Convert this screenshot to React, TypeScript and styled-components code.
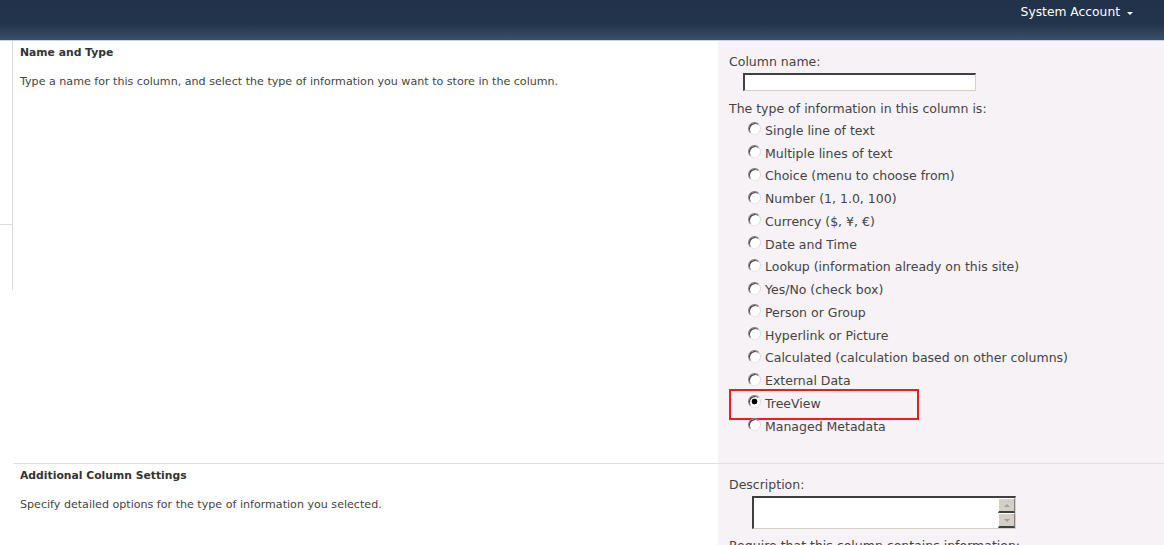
import React from "react";
import styled, { createGlobalStyle } from "styled-components";

const Global = createGlobalStyle`
  html, body { margin: 0; padding: 0; background: #fff; }
  body { font-family: Verdana, "DejaVu Sans", sans-serif; font-size: 11.1px; color: #444; overflow: hidden; }
  * { box-sizing: border-box; }
`;

const Page = styled.div`
  width: 1164px;
  height: 545px;
  overflow: hidden;
`;

const TopBar = styled.header`
  height: 41px;
  display: flex;
  justify-content: flex-end;
  align-items: flex-start;
  padding: 4px 31px 0 0;
  background: linear-gradient(to bottom, #21324a 0px, #22344b 24px, #2e4258 32px, #3b5068 40px);
  border-bottom: 1px solid #c9d1db;
`;

const UserMenu = styled.div`
  display: flex;
  align-items: center;
  gap: 7px;
  color: #fff;
  font-size: 12.3px;
  line-height: 16px;
`;

const Caret = styled.span`
  width: 0;
  height: 0;
  border-left: 3px solid transparent;
  border-right: 3px solid transparent;
  border-top: 3px solid #fff;
  margin-top: 2px;
`;

const Body = styled.div`
  display: flex;
`;

const LeftNav = styled.nav`
  width: 13px;
  flex: none;
  display: flex;
  flex-direction: column;
`;

const NavBlock = styled.div<{ $h: number; $top?: boolean }>`
  height: ${(p) => p.$h}px;
  border-right: 1px solid #dbdbdb;
  border-top: ${(p) => (p.$top ? "1px solid #dbdbdb" : "none")};
`;

const Main = styled.main`
  flex: 1;
  display: flex;
  flex-direction: column;
`;

const Section = styled.section<{ $divider?: boolean }>`
  display: grid;
  grid-template-columns: 705px 1fr;
  border-top: ${(p) => (p.$divider ? "1px solid #e0dfe1" : "none")};
`;

const Info = styled.div<{ $h: number }>`
  padding: 5px 7px 0 7px;
  min-height: ${(p) => p.$h}px;
`;

const InfoTitle = styled.h3`
  margin: 0 0 15px 0;
  font-size: 10.8px;
  font-weight: bold;
  color: #333;
  line-height: 14px;
`;

const InfoText = styled.p`
  margin: 0;
  line-height: 14px;
  color: #444;
`;

const Controls = styled.div`
  background: #f6f2f6;
  padding: 13px 0 0 11px;
  display: flex;
  flex-direction: column;
  font-size: 12.5px;
`;

const Label = styled.div`
  line-height: 15px;
  color: #444;
`;

const NameInput = styled.div`
  width: 233px;
  height: 18px;
  margin: 4px 0 0 14px;
  background: #fff;
  border-top: 2px solid #404040;
  border-left: 2px solid #404040;
  border-right: 1px solid #d4d0c8;
  border-bottom: 1px solid #d4d0c8;
`;

const TypeLabel = styled(Label)`
  margin-top: 10px;
`;

const RadioList = styled.div`
  display: flex;
  flex-direction: column;
  padding: 3px 0 0 19px;
`;

const RadioRow = styled.label<{ $marked?: boolean }>`
  position: relative;
  height: 22.75px;
  display: flex;
  align-items: center;
  gap: 4px;
  color: #444;
  line-height: 15px;
  &::before {
    content: "";
    display: ${(p) => (p.$marked ? "block" : "none")};
    position: absolute;
    left: -19px;
    top: -3px;
    width: 186px;
    height: 27px;
    border: 2px solid #ea1c24;
  }
`;

const RadioDot = styled.span<{ $checked?: boolean }>`
  width: 13px;
  height: 13px;
  flex: none;
  border-radius: 50%;
  margin-top: -3px;
  background: ${(p) =>
    p.$checked
      ? "radial-gradient(circle, #000 0 2.6px, #fff 3.2px)"
      : "#fff"};
  border: 1px solid;
  border-color: #7f7f7f #dcdcdc #e8e8e8 #7f7f7f;
  box-shadow: inset 1px 1px 0 #404040;
`;

const DescWrap = styled.div`
  display: flex;
  flex-direction: column;
`;

const TextArea = styled.div`
  width: 264px;
  height: 33px;
  margin: 4px 0 0 23px;
  display: flex;
  background: #fff;
  border-top: 2px solid #404040;
  border-left: 2px solid #404040;
  border-right: 1px solid #d4d0c8;
  border-bottom: 1px solid #d4d0c8;
`;

const AreaField = styled.div`
  flex: 1;
`;

const ScrollBar = styled.div`
  width: 17px;
  display: flex;
  flex-direction: column;
  background: #e4e0dc;
`;

const ScrollBtn = styled.div`
  flex: 1;
  display: flex;
  align-items: center;
  justify-content: center;
  background: #d4d0c8;
  border-top: 1px solid #fff;
  border-left: 1px solid #fff;
  border-right: 1px solid #808080;
  border-bottom: 2px solid #404040;
`;

const Tri = styled.span<{ $up?: boolean }>`
  width: 0;
  height: 0;
  border-left: 3px solid transparent;
  border-right: 3px solid transparent;
  ${(p) => (p.$up ? "border-bottom: 3px solid #a0a0a0;" : "border-top: 3px solid #a0a0a0;")}
`;

const RequireLabel = styled(Label)`
  margin-top: 9px;
`;

const types = [
  "Single line of text",
  "Multiple lines of text",
  "Choice (menu to choose from)",
  "Number (1, 1.0, 100)",
  "Currency ($, ¥, €)",
  "Date and Time",
  "Lookup (information already on this site)",
  "Yes/No (check box)",
  "Person or Group",
  "Hyperlink or Picture",
  "Calculated (calculation based on other columns)",
  "External Data",
  "TreeView",
  "Managed Metadata",
];

export default function App() {
  return (
    <Page>
      <Global />
      <TopBar>
        <UserMenu>
          System Account <Caret />
        </UserMenu>
      </TopBar>
      <Body>
        <LeftNav>
          <NavBlock $h={183} />
          <NavBlock $h={66} $top />
        </LeftNav>
        <Main>
          <Section>
            <Info $h={422}>
              <InfoTitle>Name and Type</InfoTitle>
              <InfoText>
                Type a name for this column, and select the type of information you want to store in the column.
              </InfoText>
            </Info>
            <Controls>
              <Label>Column name:</Label>
              <NameInput />
              <TypeLabel>The type of information in this column is:</TypeLabel>
              <RadioList>
                {types.map((t) => (
                  <RadioRow key={t} $marked={t === "TreeView"}>
                    <RadioDot $checked={t === "TreeView"} />
                    {t}
                  </RadioRow>
                ))}
              </RadioList>
            </Controls>
          </Section>
          <Section $divider>
            <Info $h={100}>
              <InfoTitle>Additional Column Settings</InfoTitle>
              <InfoText>Specify detailed options for the type of information you selected.</InfoText>
            </Info>
            <Controls>
              <DescWrap>
                <Label>Description:</Label>
                <TextArea>
                  <AreaField />
                  <ScrollBar>
                    <ScrollBtn>
                      <Tri $up />
                    </ScrollBtn>
                    <ScrollBtn>
                      <Tri />
                    </ScrollBtn>
                  </ScrollBar>
                </TextArea>
                <RequireLabel>Require that this column contains information:</RequireLabel>
              </DescWrap>
            </Controls>
          </Section>
        </Main>
      </Body>
    </Page>
  );
}
